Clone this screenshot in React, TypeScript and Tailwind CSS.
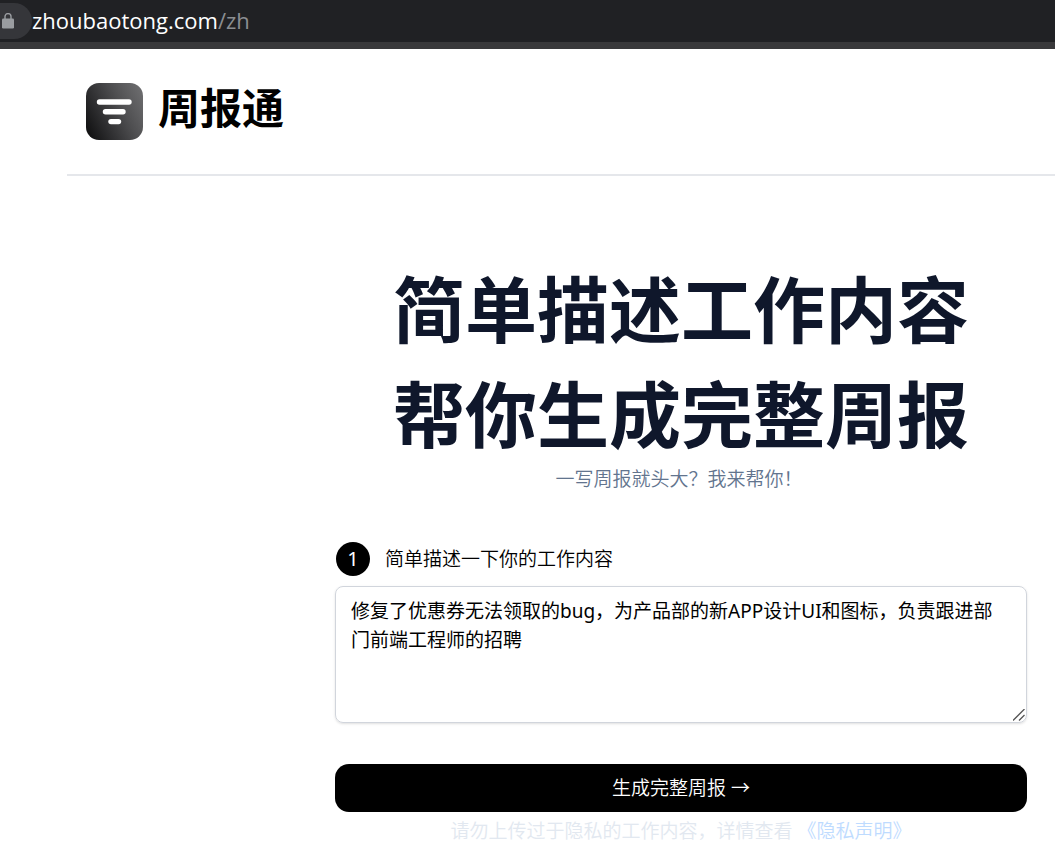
import React, { useState } from "react";

const LockIcon: React.FC = () => (
  <svg className="ml-[2px] h-4 w-3" viewBox="0 0 12 16" aria-hidden="true">
    <path d="M3 6V3.6a3 3 0 0 1 6 0V6" fill="none" stroke="#9a9da1" strokeWidth="1.4" />
    <rect x="0" y="5.5" width="12" height="10" rx="1.3" fill="#9a9da1" />
  </svg>
);

const Logo: React.FC = () => (
  <svg className="h-[57px] w-[57px]" viewBox="0 0 57 57" aria-hidden="true">
    <defs>
      <linearGradient id="logo-bg" x1="0" y1="0.75" x2="1" y2="0.25">
        <stop offset="0" stopColor="#141415" />
        <stop offset="0.3" stopColor="#303032" />
        <stop offset="0.65" stopColor="#505052" />
        <stop offset="1" stopColor="#6a6a6c" />
      </linearGradient>
    </defs>
    <rect width="57" height="57" rx="13" fill="url(#logo-bg)" />
    <g stroke="#fff" strokeWidth="5.4" strokeLinecap="round">
      <path d="M13.5 19h29.5" />
      <path d="M19.5 28.7h17.5" />
      <path d="M25 38.6h7.5" />
    </g>
  </svg>
);

const App: React.FC = () => {
  const [content, setContent] = useState(
    "修复了优惠券无法领取的bug，为产品部的新APP设计UI和图标，负责跟进部门前端工程师的招聘"
  );

  return (
    <div
      lang="zh-CN"
      className="overflow-hidden bg-white font-['Noto_Sans','Noto_Sans_CJK_SC',sans-serif] text-[19px] leading-[29px] font-[350] text-black"
    >
      {/* Address bar */}
      <div className="flex h-[49px] items-start border-b-[7px] border-[#39393b] bg-[#202124]">
        <div className="mt-[3px] flex h-9 w-8 items-center rounded-r-full bg-[#35363a]">
          <LockIcon />
        </div>
        <div className="mt-[6px] font-['Open_Sans',sans-serif] text-[22px] font-normal text-white">
          zhoubaotong.com<span className="text-[#8b8e92]">/zh</span>
        </div>
      </div>

      {/* Header */}
      <header className="ml-[67px] flex h-[127px] items-center gap-[15px] border-b-2 border-gray-200 pl-[19px]">
        <Logo />
        <span className="pb-2 text-[42px] leading-[56px] font-bold">周报通</span>
      </header>

      <main className="mr-7 ml-auto flex max-w-[692px] flex-col pt-[81px]">
        <h1 className="text-center text-[72px] leading-[105px] font-bold text-slate-900">
          简单描述工作内容
          <br />
          帮你生成完整周报
        </h1>
        <p className="pr-1 text-center leading-6 text-slate-500">一写周报就头大？我来帮你！</p>

        <div className="mt-[51px] flex items-center gap-[15px] pl-px">
          <span className="flex h-[34px] w-[34px] items-center justify-center rounded-full bg-black text-xl font-normal text-white">
            1
          </span>
          <label htmlFor="content">简单描述一下你的工作内容</label>
        </div>
        <div className="relative mt-[10px]">
          <textarea
            id="content"
            className="block h-[137px] w-full rounded-lg border border-gray-300 py-[10px] pr-6 pl-[15px] font-normal shadow-sm [&::-webkit-resizer]:bg-transparent"
            value={content}
            onChange={(e) => setContent(e.target.value)}
          />
          <svg
            className="pointer-events-none absolute right-[2px] bottom-[2px] h-3 w-3"
            viewBox="0 0 12 12"
            stroke="#555"
            strokeWidth="1.3"
            aria-hidden="true"
          >
            <path d="M0 11.5L11.5 0M6 11.5L11.5 6" />
          </svg>
        </div>

        <button
          type="button"
          className="mt-[41px] h-12 w-full rounded-[14px] bg-black text-white"
        >
          生成完整周报 →
        </button>
        <p className="mt-[5px] text-center text-slate-200">
          请勿上传过于隐私的工作内容，详情查看{" "}
          <a href="#privacy" className="text-blue-200">
            《隐私声明》
          </a>
        </p>
      </main>
    </div>
  );
};

export default App;
